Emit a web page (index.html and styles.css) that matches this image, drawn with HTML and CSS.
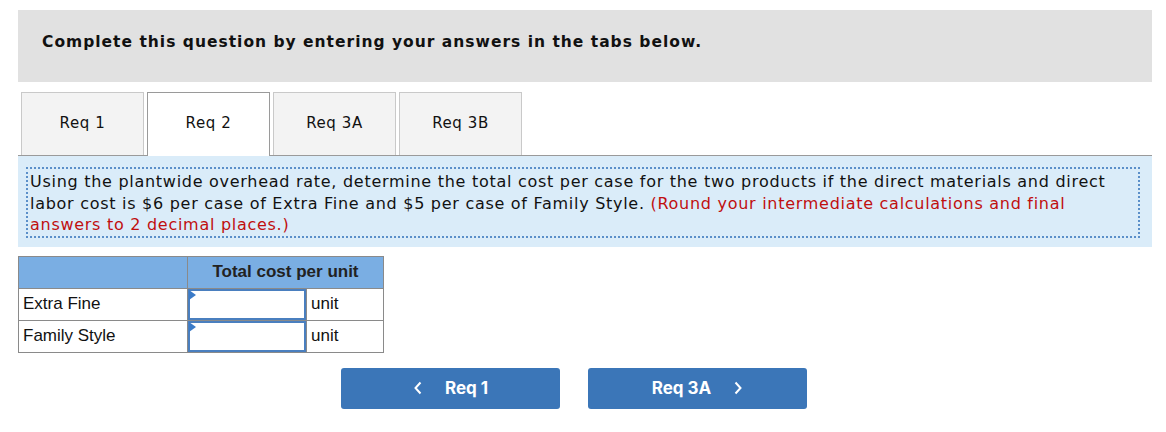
FILE: index.html
```html
<!DOCTYPE html>
<html lang="en">

<head>
    <meta charset="UTF-8">
    <meta name="viewport" content="width=device-width, initial-scale=1.0">
    <title>Req 2</title>
    <link rel="stylesheet" href="styles.css">
</head>

<body>

    <div class="page">
        <div class="intro">
            <p>Complete this question by entering your answers in the tabs below.</p>
        </div>

        <div class="tabs">
            <div class="tab">Req 1</div>
            <div class="tab active">Req 2</div>
            <div class="tab">Req 3A</div>
            <div class="tab">Req 3B</div>
        </div>

        <div class="question">
            <div class="question-text">
                Using the plantwide overhead rate, determine the total cost per case for the two products if the direct materials and direct
                labor cost is $6 per case of Extra Fine and $5 per case of Family Style.
                <span class="hint">(Round your intermediate calculations and final answers to 2 decimal places.)</span>
            </div>
        </div>

        <table class="answers">
            <tr class="head">
                <th></th>
                <th colspan="2">Total cost per unit</th>
            </tr>
            <tr>
                <td class="label">Extra Fine</td>
                <td class="entry"><input type="text"></td>
                <td class="unit">unit</td>
            </tr>
            <tr>
                <td class="label">Family Style</td>
                <td class="entry"><input type="text"></td>
                <td class="unit">unit</td>
            </tr>
        </table>

        <div class="nav">
            <button class="nav-btn">
                <svg width="10" height="14" viewBox="0 0 10 14"><path d="M7.5 1.5 L2.5 7 L7.5 12.5" fill="none" stroke="#fff" stroke-width="2"/></svg>
                <span>Req 1</span>
            </button>
            <button class="nav-btn">
                <span>Req 3A</span>
                <svg width="10" height="14" viewBox="0 0 10 14"><path d="M2.5 1.5 L7.5 7 L2.5 12.5" fill="none" stroke="#fff" stroke-width="2"/></svg>
            </button>
        </div>
    </div>

</body>

</html>
```

FILE: styles.css
```css
body {
    margin: 0;
    background: #ffffff;
    font-family: "DejaVu Sans", Verdana, sans-serif;
    color: #111;
}

.page {
    width: 1134px;
    padding: 10px 14px 0 18px;
}

.intro {
    background-color: #e1e1e1;
    height: 72px;
    padding: 0 24px;
    display: flex;
    align-items: center;
}

.intro p {
    margin: 0 0 8px 0;
    font-weight: bold;
    font-size: 15.5px;
    letter-spacing: 1px;
}

.tabs {
    display: flex;
    gap: 3px;
    margin-top: 10px;
    padding-left: 3px;
    border-bottom: 1px solid #9a9a9a;
}

.tab {
    width: 123px;
    background-color: #f3f3f3;
    border: 1px solid #c9c9c9;
    border-bottom: none;
    display: flex;
    align-items: center;
    justify-content: center;
    font-size: 15px;
    letter-spacing: 0.6px;
    padding-bottom: 2px;
    box-sizing: border-box;
    height: 63px;
}

.tab.active {
    background-color: #ffffff;
    border-color: #9a9a9a;
    margin-bottom: -1px;
    height: 64px;
    padding-bottom: 3px;
}

.question {
    background-color: #daecf9;
    padding: 11px 12px 9px 8px;
}

.question-text {
    border: 2px dotted #5b8fc9;
    padding: 2px 0 0 2px;
    font-size: 16px;
    letter-spacing: 0.72px;
    line-height: 21.5px;
    color: #111;
}

.hint {
    color: #c00f0f;
}

.answers {
    margin-top: 9px;
    border-collapse: collapse;
    font-family: "Liberation Sans", Arial, sans-serif;
    font-size: 17px;
}

.answers th,
.answers td {
    border: 1px solid #8a8a8a;
    padding: 0;
}

.answers .head th {
    background-color: #7aaee3;
    height: 31px;
    font-weight: bold;
    color: #222;
}

.answers td {
    height: 31px;
}

.answers .label {
    width: 164px;
    padding-left: 4px;
}

.answers .entry {
    width: 118px;
    position: relative;
}

.answers .entry::before {
    content: "";
    position: absolute;
    left: 1px;
    top: 1px;
    border-left: 7px solid #3b7bc8;
    border-top: 5px solid transparent;
    border-bottom: 5px solid transparent;
}

.answers input {
    display: block;
    width: 118px;
    height: 31px;
    box-sizing: border-box;
    border: 2px solid #4a7fbf;
    margin: 0;
    padding: 0 4px;
    font-size: 16px;
}

.answers .unit {
    width: 72px;
    padding-left: 4px;
}

.nav {
    display: flex;
    gap: 28px;
    margin-top: 15px;
    padding-left: 323px;
}

.nav-btn {
    width: 219px;
    height: 41px;
    background-color: #3b76b8;
    border: none;
    border-radius: 3px;
    color: #fff;
    font-family: Inter, "Liberation Sans", sans-serif;
    font-weight: 700;
    font-size: 17px;
    display: flex;
    align-items: center;
    justify-content: center;
    gap: 22px;
    cursor: pointer;
}
```
